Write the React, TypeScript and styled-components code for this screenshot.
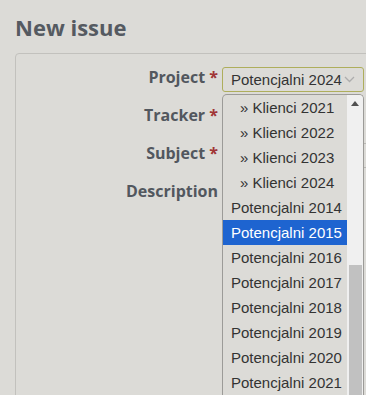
import React from "react";
import styled, { createGlobalStyle } from "styled-components";

const Global = createGlobalStyle`
  html, body {
    margin: 0;
    padding: 0;
    background: #dcdbd7;
    overflow: hidden;
    font-family: "Open Sans", "Liberation Sans", sans-serif;
  }
`;

const Page = styled.div`
  padding-top: 12px;
  width: 366px;
  height: 395px;
  overflow: hidden;
`;

const Title = styled.h2`
  margin: 0 0 0 15px;
  font-size: 22px;
  line-height: 30px;
  font-weight: 700;
  color: #555a61;
`;

const Box = styled.div`
  margin: 11px -30px 0 15px;
  border: 1px solid #c2c1bd;
  border-radius: 4px;
  min-height: 400px;
`;

const Form = styled.div`
  display: grid;
  grid-template-columns: 202px 1fr;
  column-gap: 4px;
  row-gap: 13px;
  grid-auto-rows: 25px;
  padding-top: 13px;
`;

const Label = styled.label`
  text-align: right;
  align-self: start;
  font-size: 16px;
  line-height: 21px;
  font-weight: 700;
  color: #52575e;
  white-space: nowrap;
`;

const Req = styled.span`
  color: #a03535;
`;

const Field = styled.div`
  position: relative;
  display: flex;
  align-items: center;
`;

const Select = styled.div<{ $focus?: boolean }>`
  box-sizing: border-box;
  width: 142px;
  height: 25px;
  border: 1px solid ${(p) => (p.$focus ? "#aeae5c" : "#b9b8b4")};
  border-radius: 3px;
  display: flex;
  align-items: center;
  justify-content: space-between;
  padding: 0 8px 0 8px;
  font-family: "Liberation Sans", Arial, sans-serif;
  font-size: 15px;
  color: #333;
`;

const Input = styled.div`
  box-sizing: border-box;
  width: 300px;
  height: 25px;
  border: 1px solid #b9b8b4;
  border-radius: 3px;
`;

const Listbox = styled.div`
  position: absolute;
  left: 0;
  top: 27px;
  box-sizing: border-box;
  width: 142px;
  height: 302px;
  background: #dcdbd7;
  border: 1px solid #9c9b98;
  border-bottom: none;
  border-radius: 5px 5px 0 0;
  overflow: hidden;
  display: flex;
  z-index: 2;
`;

const Options = styled.div`
  flex: 1;
  display: flex;
  flex-direction: column;
`;

const Option = styled.div<{ $nested?: boolean; $selected?: boolean }>`
  flex: none;
  height: 25px;
  line-height: 25px;
  padding-left: ${(p) => (p.$nested ? "17px" : "8px")};
  font-family: "Liberation Sans", Arial, sans-serif;
  font-size: 15px;
  white-space: nowrap;
  color: ${(p) => (p.$selected ? "#ffffff" : "#333333")};
  background: ${(p) => (p.$selected ? "#1e64d0" : "transparent")};
`;

const Scrollbar = styled.div`
  flex: none;
  width: 16px;
  background: #f0f0f0;
  display: flex;
  flex-direction: column;
  align-items: center;
`;

const Arrow = styled.div`
  flex: none;
  height: 16px;
  display: flex;
  align-items: center;
  justify-content: center;
`;

const Thumb = styled.div<{ $top: number }>`
  margin-top: ${(p) => p.$top}px;
  margin-left: 1px;
  width: 13px;
  flex: 1;
  background: #c1c1c1;
`;

const nested = ["Klienci 2021", "Klienci 2022", "Klienci 2023", "Klienci 2024"];
const years = [2014, 2015, 2016, 2017, 2018, 2019, 2020, 2021];

export default function App() {
  return (
    <Page>
      <Global />
      <Title>New issue</Title>
      <Box>
        <Form>
          <Label>
            Project <Req>*</Req>
          </Label>
          <Field>
            <Select $focus>
              <span>Potencjalni 2024</span>
              <svg width="11" height="7" viewBox="0 0 11 7">
                <path d="M1 1l4.5 4.5L10 1" fill="none" stroke="#adadad" strokeWidth="1.3" />
              </svg>
            </Select>
            <Listbox>
              <Options>
                {nested.map((n) => (
                  <Option key={n} $nested>
                    » {n}
                  </Option>
                ))}
                {years.map((y) => (
                  <Option key={y} $selected={y === 2015}>
                    Potencjalni {y}
                  </Option>
                ))}
              </Options>
              <Scrollbar>
                <Arrow>
                  <svg width="8" height="5" viewBox="0 0 8 5">
                    <path d="M0 5L4 0L8 5Z" fill="#505050" />
                  </svg>
                </Arrow>
                <Thumb $top={154} />
              </Scrollbar>
            </Listbox>
          </Field>
          <Label>
            Tracker <Req>*</Req>
          </Label>
          <Field>
            <Select />
          </Field>
          <Label>
            Subject <Req>*</Req>
          </Label>
          <Field>
            <Input />
          </Field>
          <Label>Description</Label>
          <Field />
        </Form>
      </Box>
    </Page>
  );
}
